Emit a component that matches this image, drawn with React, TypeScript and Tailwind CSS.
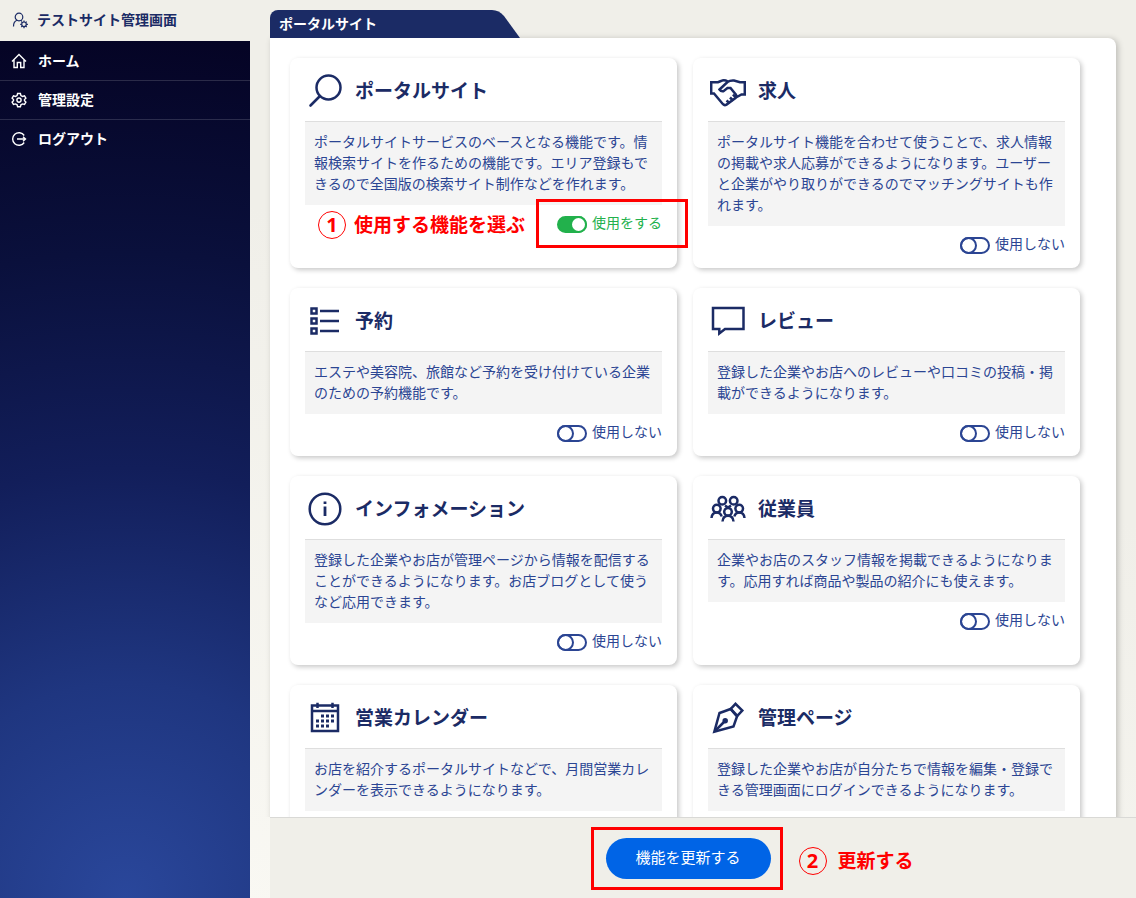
import type React from 'react';
import { useState } from 'react';

import { clsx } from 'clsx';

interface Feature {
  id: string;
  title: string;
  description: string;
  icon: React.ReactNode;
}

interface FeatureCardProps {
  feature: Feature;
  enabled: boolean;
  onToggle: () => void;
  children?: React.ReactNode;
}

interface StepNoteProps {
  step: number;
  text: string;
  className?: string;
}

const features: Feature[] = [
  {
    id: 'portal',
    title: 'ポータルサイト',
    description:
      'ポータルサイトサービスのベースとなる機能です。情報検索サイトを作るための機能です。エリア登録もできるので全国版の検索サイト制作などを作れます。',
    icon: (
      <>
        <circle cx="21.5" cy="14.5" r="12" />
        <path d="M12.5 23.5 3.5 32.5" strokeLinecap="round" strokeWidth="2.6" />
      </>
    ),
  },
  {
    id: 'recruit',
    title: '求人',
    description:
      'ポータルサイト機能を合わせて使うことで、求人情報の掲載や求人応募ができるようになります。ユーザーと企業がやり取りができるのでマッチングサイトも作れます。',
    icon: (
      <>
        <path d="M18 8.5C15 7 13 7 11 8L8 9.2H1.2V20.5H4L13 31.2Q14.5 32.8 16.5 31.6L25.5 25Q27 23.5 26 21.8L20.5 15H17.5L13.5 18.2Q11 18.8 9.5 16.5L17.5 9Q20 7.2 24 7.5L30 9.2H34.8V21.5H31.5L26 24.5" />
        <path d="M16.5 27.5 19.5 30M20 24.5 23 27.5M23 21.5 26 25" />
      </>
    ),
  },
  {
    id: 'reserve',
    title: '予約',
    description: 'エステや美容院、旅館など予約を受け付けている企業のための予約機能です。',
    icon: (
      <path d="M4.5 5.5H9.5V10.5H4.5ZM4.5 15.5H9.5V20.5H4.5ZM4.5 25.5H9.5V30.5H4.5ZM13 8H32M13 18H32M13 28H32" />
    ),
  },
  {
    id: 'review',
    title: 'レビュー',
    description: '登録した企業やお店へのレビューや口コミの投稿・掲載ができるようになります。',
    icon: <path d="M3 5H33.5V26H15L9.3 30.5V26H3Z" />,
  },
  {
    id: 'information',
    title: 'インフォメーション',
    description:
      '登録した企業やお店が管理ページから情報を配信することができるようになります。お店ブログとして使うなど応用できます。',
    icon: (
      <>
        <circle cx="18" cy="18" r="15.3" />
        <path d="M18 15.5V25M18 10.5V13" strokeWidth="2.8" />
      </>
    ),
  },
  {
    id: 'staff',
    title: '従業員',
    description:
      '企業やお店のスタッフ情報を掲載できるようになります。応用すれば商品や製品の紹介にも使えます。',
    icon: (
      <>
        <circle cx="12.3" cy="9.8" r="3.8" />
        <circle cx="23.7" cy="9.8" r="3.8" />
        <circle cx="6.8" cy="17.6" r="3.8" />
        <circle cx="29.2" cy="17.6" r="3.8" />
        <circle cx="18" cy="20.8" r="3.8" />
        <path d="M1.5 27Q2 21.5 6.8 21.5 10.5 21.5 11.7 25.5M34.5 27Q34 21.5 29.2 21.5 25.5 21.5 24.3 25.5M12.5 30.5Q13 24.7 18 24.7T23.5 30.5M15 14.5 18 16.5 21 14.5" />
      </>
    ),
  },
  {
    id: 'calendar',
    title: '営業カレンダー',
    description:
      'お店を紹介するポータルサイトなどで、月間営業カレンダーを表示できるようになります。',
    icon: (
      <>
        <path d="M5 5.5H31V31H5ZM5 11H31M10.5 2.8V8M25.5 2.8V8" />
        <path d="M14 16H27" strokeDasharray="3 2" strokeWidth="3" />
        <path d="M9 21H27" strokeDasharray="3 2" strokeWidth="3" />
        <path d="M9 26H22" strokeDasharray="3 2" strokeWidth="3" />
      </>
    ),
  },
  {
    id: 'page',
    title: '管理ページ',
    description:
      '登録した企業やお店が自分たちで情報を編集・登録できる管理画面にログインできるようになります。',
    icon: (
      <>
        <path d="M4.3 31.8 9.5 13Q14 11.5 20.5 9L27 16.5 23.5 26.5Z" />
        <path d="M20.8 8.8 25.5 3.8 32.3 10.5 27.3 15.8Z" />
        <path d="M5 31 14.5 21.5" />
        <circle cx="15.2" cy="20.8" r="1.5" fill="currentColor" />
      </>
    ),
  },
];

const menuItems = [
  {
    label: 'ホーム',
    icon: <path d="M1 8.5 8 1.5 15 8.5M3 7V14.5H6.3V9.5H9.7V14.5H13V7" />,
  },
  {
    label: '管理設定',
    icon: (
      <>
        <path d="M6.6 1.5H9.4L9.9 3.5 11.5 4.4 13.5 3.8 14.9 6.2 13.5 7.6V8.7L14.9 10.1 13.5 12.4 11.5 11.9 9.9 12.8 9.4 14.8H6.6L6.1 12.8 4.5 11.9 2.5 12.4 1.1 10.1 2.5 8.7V7.6L1.1 6.2 2.5 3.8 4.5 4.4 6.1 3.5Z" />
        <circle cx="8" cy="8.1" r="2.1" />
      </>
    ),
  },
  {
    label: 'ログアウト',
    icon: <path d="M13.2 4.5A6.3 6.3 0 1 0 13.2 11.5M6 8H14.5M12 5.8 14.5 8 12 10.2" />,
  },
];

const StepNote: React.FC<StepNoteProps> = ({ step, text, className }) => (
  <p
    className={clsx(
      'flex items-center whitespace-nowrap text-[19px] leading-7 font-bold text-[#ff0000]',
      className
    )}
  >
    <span className="flex size-7 items-center justify-center rounded-full border border-[#ff0000] font-['Open_Sans',sans-serif] text-xl">
      {step}
    </span>
    <span className="pb-0.5">{text}</span>
  </p>
);

const FeatureCard: React.FC<FeatureCardProps> = ({ feature, enabled, onToggle, children }) => (
  <section className="relative rounded-lg bg-white px-[15px] shadow-[2px_2px_5px_rgba(0,0,0,0.22)]">
    <div className="flex h-[63px] items-center gap-3 pt-0.5 pl-0.5 text-[#1b2b65]">
      <svg viewBox="0 0 36 36" className="size-9" fill="none" stroke="currentColor" strokeWidth="2.5" aria-hidden="true">
        {feature.icon}
      </svg>
      <h2 className="text-[19px] font-bold">{feature.title}</h2>
    </div>
    <p className="border-t border-[#dedede] bg-[#f4f4f4] px-[9px] pt-[9px] pb-[11px] text-sm leading-[21px] text-[#2b4593]">
      {feature.description}
    </p>
    <div className="flex h-[42px] justify-end pt-1.5">
      <label
        className={clsx(
          'flex h-[21px] cursor-pointer items-center gap-[5px] text-sm',
          enabled ? 'text-[#22b14c]' : 'text-[#2b4593]'
        )}
      >
        <input
          type="checkbox"
          checked={enabled}
          onChange={onToggle}
          className="relative mt-[5px] h-[17px] w-[30px] appearance-none rounded-full border-2 border-current before:absolute before:-top-0.5 before:-left-0.5 before:size-[17px] before:rounded-full before:border-2 before:border-current checked:bg-current checked:before:left-[11px] checked:before:bg-white"
        />
        {enabled ? '使用をする' : '使用しない'}
      </label>
    </div>
    {children}
  </section>
);

const Sidebar: React.FC = () => (
  <aside className="flex w-[250px] shrink-0 flex-col">
    <h1 className="flex h-[41px] items-center gap-2 bg-[#f0efe9] pl-3 text-sm font-bold text-[#1b2b65]">
      <svg viewBox="0 0 17 17" className="size-[17px]" fill="none" stroke="currentColor" strokeWidth="1.2" aria-hidden="true">
        <circle cx="7" cy="5" r="3.8" />
        <path d="M1.5 14.5Q1.5 9.5 5 8.3M8.8 8.5 10 9" />
        <circle cx="12" cy="12.3" r="2.3" />
        <path d="M12 8.5V10M12 14.6V16.2M8.2 12.3H9.7M14.3 12.3H15.9M9.3 9.6 10.4 10.7M13.6 13.9 14.7 15M9.3 15 10.4 13.9M13.6 10.7 14.7 9.6" />
      </svg>
      <span className="pb-1">テストサイト管理画面</span>
    </h1>
    <nav className="flex-1 bg-[radial-gradient(circle_860px_at_50%_100%,#2a479b_0%,#1f3680_25%,#121e5a_50%,#0a103c_75%,#050425_100%)] pt-px">
      <ul>
        {menuItems.map((item) => (
          <li key={item.label} className="border-b border-white/15 last:border-b-0">
            <a href="#" className="flex h-[38px] items-center gap-[11px] pl-[11px] text-sm font-bold text-white">
              <svg viewBox="0 0 16 16" className="size-4" fill="none" stroke="currentColor" strokeWidth="1.4" aria-hidden="true">
                {item.icon}
              </svg>
              <span className="pb-0.5">{item.label}</span>
            </a>
          </li>
        ))}
      </ul>
    </nav>
  </aside>
);

const App: React.FC = () => {
  const [enabledIds, setEnabledIds] = useState<string[]>(['portal']);

  const toggle = (id: string) => {
    setEnabledIds((ids) => (ids.includes(id) ? ids.filter((x) => x !== id) : [...ids, id]));
  };

  return (
    <div className="flex h-screen overflow-hidden bg-[linear-gradient(20deg,#faf9f4_0%,#f0efe9_60%)] font-['Noto_Sans_CJK_JP',sans-serif]">
      <Sidebar />

      <form className="flex min-w-0 flex-1 flex-col" onSubmit={(e) => e.preventDefault()}>
        <main className="min-h-0 flex-1 overflow-y-auto px-5 pt-2.5 [scrollbar-width:none]">
          {/* Tab */}
          <div className="flex h-7">
            <div className="flex w-[220px] items-center rounded-tl-lg bg-[#1b2b65] pb-0.5 pl-[9px] text-sm font-bold text-white">
              ポータルサイト
            </div>
            <svg viewBox="0 0 30 28" className="h-7 w-[30px] fill-[#1b2b65]" aria-hidden="true">
              <path d="M0 0H2Q9 0 14 6L30 28H0Z" />
            </svg>
          </div>

          {/* Feature list */}
          <div className="grid grid-cols-2 gap-x-4 gap-y-5 rounded-tr-lg bg-white pt-5 pr-9 pb-5 pl-5 shadow-[2px_1px_6px_rgba(0,0,0,0.22)]">
            {features.map((feature) => (
              <FeatureCard
                key={feature.id}
                feature={feature}
                enabled={enabledIds.includes(feature.id)}
                onToggle={() => toggle(feature.id)}
              >
                {feature.id === 'portal' && (
                  <>
                    <StepNote step={1} text="使用する機能を選ぶ" className="absolute right-[152px] bottom-7 gap-2" />
                    <div className="pointer-events-none absolute -right-[11px] bottom-5 h-[49px] w-[152px] border-3 border-[#ff0000]" />
                  </>
                )}
              </FeatureCard>
            ))}
          </div>
        </main>

        <footer className="ml-5 flex h-[81px] shrink-0 items-center justify-center border-t border-[#d9d9d6] bg-[#f0efe9] pr-[30px]">
          <div className="relative">
            <button
              type="submit"
              className="h-[41px] w-[165px] cursor-pointer rounded-full bg-[#0064e6] pb-0.5 text-[15px] text-white"
            >
              機能を更新する
            </button>
            <div className="pointer-events-none absolute -inset-y-[11px] -right-3 -left-[15px] border-3 border-[#ff0000]" />
            <StepNote step={2} text="更新する" className="absolute top-2 left-full ml-7 gap-[11px]" />
          </div>
        </footer>
      </form>
    </div>
  );
};

export default App;
